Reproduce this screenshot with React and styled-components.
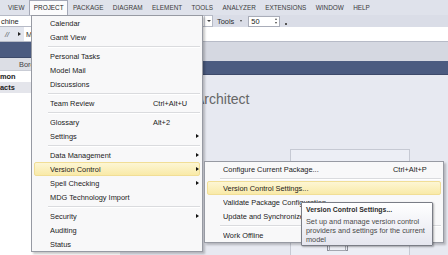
import React from "react";
import styled, { createGlobalStyle } from "styled-components";

const GlobalStyle = createGlobalStyle`
  html, body {
    margin: 0;
    padding: 0;
  }
  body {
    font-family: "Liberation Sans", Arial, sans-serif;
    background: #e7e9f1;
    overflow: hidden;
  }
`;

const Screen = styled.div`
  position: relative;
  width: 448px;
  height: 255px;
  overflow: hidden;
  display: flex;
  flex-direction: column;
  background: #e7e9f1;
`;

/* ---------- menu bar ---------- */

const MenuBar = styled.div`
  display: flex;
  align-items: flex-end;
  height: 16px;
  padding-left: 3.4px;
  background: #dfe2eb;
  box-sizing: border-box;
`;

const BarItem = styled.div`
  height: 15px;
  line-height: 15px;
  padding: 0 4.7px;
  font-size: 6.4px;
  color: #3a3a3a;
  box-sizing: border-box;
  white-space: nowrap;

  ${(p) =>
    p.$open &&
    `
    background: #fbfbfc;
    border: 1px solid #a4a8b6;
    border-bottom: none;
    padding: 0 3.7px;
    line-height: 14px;
    color: #1e1e1e;
  `}
`;

/* ---------- toolbar ---------- */

const Toolbar = styled.div`
  display: flex;
  align-items: center;
  height: 16px;
  background: #dadde7;
`;

const Combo = styled.div`
  display: flex;
  align-items: center;
  width: 214px;
  height: 12px;
  margin-left: -1px;
  box-sizing: border-box;
  background: #fff;
  border: 1px solid #b6bac6;
  font-size: 7.4px;
  color: #222;
  padding-left: 1px;
`;

const ComboArrow = styled.span`
  margin-left: auto;
  width: 7px;
  height: 100%;
  display: flex;
  align-items: center;
  justify-content: center;
  border-left: 1px solid #d0d3dc;
`;

const Caret = styled.span`
  width: 0;
  height: 0;
  border-top: ${(p) => p.$size || 3}px solid #444;
  border-left: ${(p) => (p.$size || 3) * 0.8}px solid transparent;
  border-right: ${(p) => (p.$size || 3) * 0.8}px solid transparent;
`;

const UpCaret = styled.span`
  width: 0;
  height: 0;
  border-bottom: 2px solid #555;
  border-left: 1.6px solid transparent;
  border-right: 1.6px solid transparent;
`;

const ToolLabel = styled.span`
  margin-left: 4px;
  font-size: 7.4px;
  color: #2b2b2b;
`;

const DropCaret = styled.span`
  margin: 0 6px 0 6px;
  display: flex;
`;

const Spin = styled.div`
  display: flex;
  align-items: center;
  width: 32px;
  height: 11px;
  box-sizing: border-box;
  background: #fff;
  border: 1px solid #a9adb9;
  padding-left: 2px;
  font-size: 7.4px;
  color: #222;
`;

const SpinButtons = styled.span`
  margin-left: auto;
  margin-right: 2px;
  display: flex;
  flex-direction: column;
  gap: 1.5px;
  align-items: center;
`;

const Overflow = styled.span`
  margin: 6px 0 0 5px;
  width: 2px;
  height: 2px;
  background: #555;
`;

/* ---------- address row ---------- */

const AddressRow = styled.div`
  display: flex;
  align-items: center;
  height: 16px;
  box-sizing: border-box;
  background: #e3e6ee;
  border-bottom: 1px solid #b7bbc7;
  font-size: 7.4px;
  color: #444;
`;

const Slashes = styled.span`
  margin-left: 5px;
  font-style: italic;
  color: #555;
`;

const Crumb = styled.span`
  margin-left: 9px;
  width: 0;
  height: 0;
  border-left: 3px solid #222;
  border-top: 2.5px solid transparent;
  border-bottom: 2.5px solid transparent;
`;

const AddressField = styled.div`
  flex: 1;
  height: 14px;
  margin-left: 3px;
  display: flex;
  align-items: center;
  padding-left: 2px;
  background: #fff;
  color: #333;
`;

/* ---------- panels ---------- */

const Body = styled.div`
  flex: 1;
  display: flex;
`;

const LeftPanel = styled.div`
  width: 120px;
  display: flex;
  flex-direction: column;
  background: #fff;
`;

const Band = styled.div`
  height: ${(p) => p.$h}px;
  background: #4b5b80;
  border-bottom: 1px solid #3d4a6a;
  box-sizing: border-box;
`;

const GridHeader = styled.div`
  height: 13px;
  box-sizing: border-box;
  display: flex;
  align-items: center;
  padding-left: 19px;
  background: #dcdee5;
  border-bottom: 1px solid #c9ccd5;
  font-size: 7.4px;
  color: #444;
`;

const GridRow = styled.div`
  height: 11px;
  display: flex;
  align-items: center;
  font-size: 7.4px;
  font-weight: bold;
  color: #222;
  background: ${(p) => (p.$shade ? "#e4e5eb" : "#fff")};
`;

const Main = styled.div`
  flex: 1;
  display: flex;
  flex-direction: column;
`;

const MainStrip = styled.div`
  height: 19px;
  background: #d5d8e1;
`;

const Content = styled.div`
  flex: 1;
  padding: 16px 0 0 75px;
  background: #e7e9f1;
`;

const Title = styled.div`
  font-size: 14px;
  line-height: 16px;
  color: #666;
  white-space: nowrap;
`;

const Card = styled.div`
  width: 120px;
  height: 120px;
  margin: 42px 0 0 95px;
  box-sizing: border-box;
  border: 1px solid #c6c9d3;
  background: #eceef5;
  padding: 87px 0 0 36px;
`;

/* ---------- menus ---------- */

const Dropdown = styled.div`
  position: absolute;
  top: ${(p) => p.$top}px;
  left: ${(p) => p.$left}px;
  width: ${(p) => p.$width}px;
  box-sizing: border-box;
  background: #f8f8f9;
  border: 1px solid #979aa3;
  box-shadow: 2px 2px 2px rgba(0, 0, 0, 0.22);
  z-index: ${(p) => p.$z};
`;

const Item = styled.div`
  display: flex;
  align-items: center;
  height: 14px;
  margin: 0 2px;
  padding-left: 15px;
  box-sizing: border-box;
  border: 1px solid transparent;
  border-radius: 2px;
  font-size: 7.4px;
  color: #1b1b1b;
  white-space: nowrap;

  ${(p) =>
    p.$hot &&
    `
    background: linear-gradient(#fdf6d4, #f9eaa8);
    border-color: #f1de96;
  `}
`;

const Label = styled.span`
  flex: 1;
  overflow: hidden;
`;

const Shortcut = styled.span`
  width: ${(p) => p.$w}px;
`;

const ArrowCell = styled.span`
  width: 6px;
  display: flex;
  justify-content: flex-end;
`;

const SubArrow = styled.span`
  width: 0;
  height: 0;
  border-left: 3px solid #111;
  border-top: 2.5px solid transparent;
  border-bottom: 2.5px solid transparent;
`;

const Separator = styled.div`
  height: 5px;
  display: flex;
  align-items: center;
  margin: 0 2px 0 ${(p) => p.$indent}px;

  &::after {
    content: "";
    flex: 1;
    border-top: 1px solid #dadbde;
    border-bottom: 1px solid #fff;
  }
`;

const Tip = styled.div`
  position: absolute;
  top: 202px;
  left: 301px;
  width: 132px;
  box-sizing: border-box;
  padding: 2px 4px 1px;
  border: 1px solid #7a7d86;
  border-radius: 1px;
  background: linear-gradient(#ffffff, #e5e6ef);
  box-shadow: 1px 1px 2px rgba(0, 0, 0, 0.3);
  z-index: 7;
`;

const TipTitle = styled.div`
  font-size: 6.9px;
  line-height: 9px;
  font-weight: bold;
  color: #2d2d2d;
`;

const TipBody = styled.div`
  margin-top: 3px;
  font-size: 7.3px;
  line-height: 9px;
  color: #4a4a4a;
`;

const barItems = [
  "VIEW",
  "PROJECT",
  "PACKAGE",
  "DIAGRAM",
  "ELEMENT",
  "TOOLS",
  "ANALYZER",
  "EXTENSIONS",
  "WINDOW",
  "HELP",
];

const projectMenu = [
  { label: "Calendar" },
  { label: "Gantt View" },
  "sep",
  { label: "Personal Tasks" },
  { label: "Model Mail" },
  { label: "Discussions" },
  "sep",
  { label: "Team Review", key: "Ctrl+Alt+U" },
  "sep",
  { label: "Glossary", key: "Alt+2" },
  { label: "Settings", sub: true },
  "sep",
  { label: "Data Management", sub: true },
  { label: "Version Control", sub: true, hot: true },
  { label: "Spell Checking", sub: true },
  { label: "MDG Technology Import" },
  "sep",
  { label: "Security", sub: true },
  { label: "Auditing" },
  { label: "Status" },
];

const versionMenu = [
  { label: "Configure Current Package...", key: "Ctrl+Alt+P" },
  "sep",
  { label: "Version Control Settings...", hot: true },
  { label: "Validate Package Configuration..." },
  { label: "Update and Synchronize..." },
  "sep",
  { label: "Work Offline" },
];

const MenuList = ({ entries, keyWidth, indent }) =>
  entries.map((e, i) =>
    e === "sep" ? (
      <Separator key={i} $indent={indent} />
    ) : (
      <Item key={i} $hot={e.hot}>
        <Label>{e.label}</Label>
        <Shortcut $w={keyWidth}>{e.key}</Shortcut>
        <ArrowCell>{e.sub && <SubArrow />}</ArrowCell>
      </Item>
    )
  );

const DocIcon = () => (
  <svg width="21" height="14" viewBox="0 0 21 14">
    <rect x="0.5" y="0.5" width="20" height="13" fill="none" stroke="#8c8f99" />
    <rect x="2.5" y="3.5" width="16" height="10" fill="none" stroke="#a4a7b0" />
  </svg>
);

export default function App() {
  return (
    <>
      <GlobalStyle />
      <Screen>
        <MenuBar>
          {barItems.map((name) => (
            <BarItem key={name} $open={name === "PROJECT"}>
              {name}
            </BarItem>
          ))}
        </MenuBar>

        <Toolbar>
          <Combo>
            chine
            <ComboArrow>
              <Caret $size={2.5} />
            </ComboArrow>
          </Combo>
          <ToolLabel>Tools</ToolLabel>
          <DropCaret>
            <Caret $size={2} />
          </DropCaret>
          <Spin>
            50
            <SpinButtons>
              <UpCaret />
              <Caret $size={2} />
            </SpinButtons>
          </Spin>
          <Overflow />
        </Toolbar>

        <AddressRow>
          <Slashes>//</Slashes>
          <Crumb />
          <AddressField>M</AddressField>
        </AddressRow>

        <Body>
          <LeftPanel>
            <Band $h={16} />
            <GridHeader>Border</GridHeader>
            <GridRow>mon</GridRow>
            <GridRow $shade>acts</GridRow>
          </LeftPanel>
          <Main>
            <MainStrip />
            <Band $h={14} />
            <Content>
              <Title>Architect</Title>
              <Card>
                <DocIcon />
              </Card>
            </Content>
          </Main>
        </Body>

        <Dropdown $top={15} $left={31} $width={172} $z={5}>
          <MenuList entries={projectMenu} keyWidth={40} indent={16} />
        </Dropdown>

        <Dropdown $top={161} $left={204} $width={240} $z={6}>
          <MenuList entries={versionMenu} keyWidth={41} indent={15} />
        </Dropdown>

        <Tip>
          <TipTitle>Version Control Settings...</TipTitle>
          <TipBody>
            Set up and manage version control
            <br />
            providers and settings for the current
            <br />
            model
          </TipBody>
        </Tip>
      </Screen>
    </>
  );
}
